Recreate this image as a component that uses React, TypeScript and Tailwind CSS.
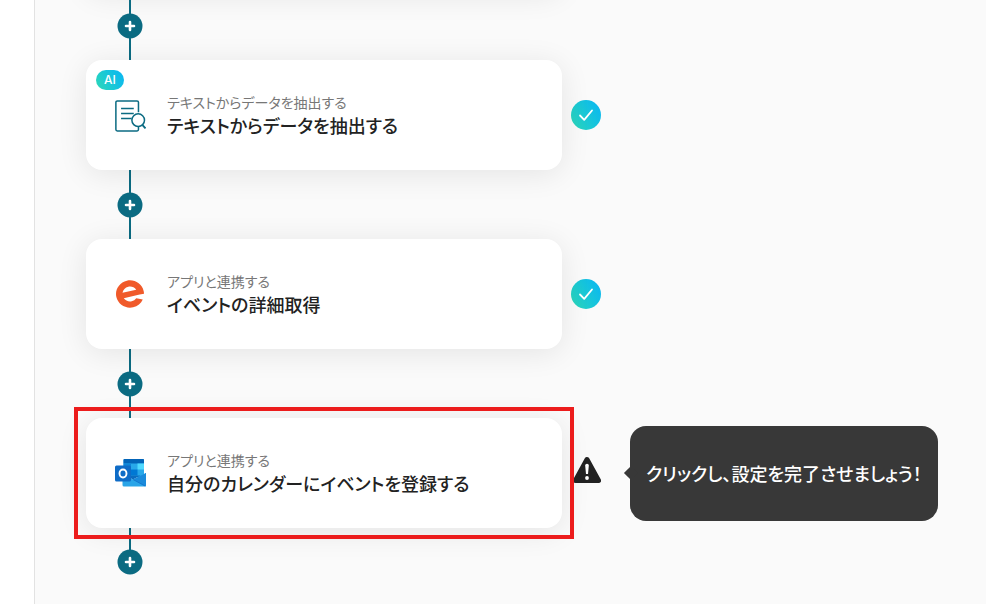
import clsx from 'clsx'
import React from 'react'
import { SiEventbrite } from 'react-icons/si'

interface FlowStep {
  id: string
  category: string
  title: string
  icon: React.ReactNode
  isAi?: boolean
  warning?: string
}

const ExtractIcon = () => (
  <svg width="34" height="36" viewBox="0 0 34 36" fill="none" stroke="#0b6b82" strokeWidth="1.6" aria-hidden="true">
    <path d="M26 15V4.500A1.500 1.500 0 0 0 24.500 3H3.500A1.500 1.500 0 0 0 2 4.500V33.500A1.500 1.500 0 0 0 3.500 35H24.500A1.500 1.500 0 0 0 26 33.500V30.500" />
    <path d="M7.500 11h13.500M7.500 16.300h13.500M7.500 21.600h11" />
    <circle cx="25.700" cy="23.500" r="6.700" />
    <path d="M30.300 28.800L33.500 32.300" strokeWidth="2" />
  </svg>
)

const OutlookIcon = () => (
  <svg width="32" height="32" viewBox="0 0 32 32" aria-hidden="true">
    <path d="M9.500 3a1 1 0 0 1 1-1H29a1 1 0 0 1 1 1v17H9.500z" fill="#28a8ea" />
    <path d="M9.500 3a1 1 0 0 1 1-1H29a1 1 0 0 1 1 1v3.500H9.500z" fill="#0364b8" />
    <path d="M9.500 6.500H17v6H9.500z" fill="#0f86d8" />
    <path d="M23.500 6.500H30v6h-6.500z" fill="#50d9ff" />
    <path d="M9.500 12.500H17v6H9.500z" fill="#0364b8" />
    <path d="M17 12.500h6.500v6H17z" fill="#0078d4" />
    <path d="M8.500 19L19.500 22.500 32 16v12a1.500 1.500 0 0 1-1.500 1.500H10A1.500 1.500 0 0 1 8.500 28z" fill="#2aa5e8" />
    <path d="M32 16v12a1.500 1.500 0 0 1-.6 1.200L19 22.500z" fill="#1a8adb" />
    <path d="M31.400 29.200L19 22.500" stroke="#0f6cc7" strokeWidth=".7" />
    <path d="M17 18.500h9.500L19 22.500l-2-1z" fill="#0a6cc0" />
    <rect x="1" y="8.500" width="16" height="16" rx="1.500" fill="#0f6cc7" />
    <ellipse cx="9" cy="16.500" rx="3.500" ry="4" fill="none" stroke="#fff" strokeWidth="1.900" />
  </svg>
)

const WarningIcon = () => (
  <svg width="30" height="30" viewBox="0 0 30 30" role="img" aria-label="未設定">
    <path d="M16 3.500L27.500 24.500H4.500z" fill="#222" stroke="#222" strokeWidth="5" strokeLinejoin="round" />
    <path d="M14.200 9.500a1.800 1.800 0 0 1 3.600 0L17 18h-2z" fill="#fff" />
    <circle cx="16" cy="22" r="1.900" fill="#fff" />
  </svg>
)

const steps: FlowStep[] = [
  {
    id: 'extract',
    category: 'テキストからデータを抽出する',
    title: 'テキストからデータを抽出する',
    icon: <ExtractIcon />,
    isAi: true,
  },
  {
    id: 'event-detail',
    category: 'アプリと連携する',
    title: 'イベントの詳細取得',
    icon: <SiEventbrite size={28} color="#f05a2a" aria-hidden="true" />,
  },
  {
    id: 'calendar',
    category: 'アプリと連携する',
    title: '自分のカレンダーにイベントを登録する',
    icon: <OutlookIcon />,
    warning: 'クリックし、設定を完了させましょう！',
  },
]

function Connector({ last }: { last?: boolean }) {
  return (
    <div className={clsx('ml-8 flex w-6 flex-col items-center', !last && 'h-[69px]')}>
      <span className={clsx('w-0.5 bg-[#0b6b82]', last ? 'h-[22px]' : 'flex-1')} />
      <button type="button" aria-label="ステップを追加" className="-my-px flex-none cursor-pointer">
        <svg width="26" height="26" viewBox="0 0 26 26" aria-hidden="true">
          <circle cx="13" cy="13" r="12.500" fill="#0b6b82" />
          <path d="M13 9v8M9 13h8" stroke="#fff" strokeWidth="2.600" strokeLinecap="round" />
        </svg>
      </button>
      {!last && <span className="w-0.5 flex-1 bg-[#0b6b82]" />}
    </div>
  )
}

function DoneBadge() {
  return (
    <span className="flex size-[30px] items-center justify-center rounded-full bg-linear-60 from-[#2ed8b6] to-[#0cb4f5]">
      <svg width="16" height="14" viewBox="0 0 16 14" fill="none" role="img" aria-label="設定済み">
        <path d="M2 7.500l4.200 4.300L14 2.500" stroke="#fff" strokeWidth="1.800" strokeLinecap="round" strokeLinejoin="round" />
      </svg>
    </span>
  )
}

function StepCard({ step }: { step: FlowStep }) {
  return (
    <div className="flex items-center">
      <div className="relative w-full max-w-[476px]">
        <button
          type="button"
          className="flex h-[110px] w-full cursor-pointer items-center gap-[21px] rounded-2xl bg-white pl-7 text-left shadow-[0_4px_30px_rgba(0,0,0,0.09)]"
        >
          <span className="flex w-8 flex-none justify-center">{step.icon}</span>
          <span className="flex flex-col">
            <span className="text-sm leading-5 text-[#777]">{step.category}</span>
            <span className="text-lg leading-[26px] font-medium text-[#222]">{step.title}</span>
          </span>
        </button>
        {step.isAi && (
          <span className="absolute top-2.5 left-2.5 rounded-full bg-linear-60 from-[#2ed8b6] to-[#0cb4f5] px-2 font-[Inter,sans-serif] text-xs leading-5 font-medium text-white">
            AI
          </span>
        )}
        {step.warning && (
          <span className="pointer-events-none absolute -inset-x-3 -inset-y-[11px] z-10 border-4 border-[#ec1c1c]" />
        )}
      </div>
      <div className={clsx('ml-[9px] flex-none', step.warning && 'pb-1')}>
        {step.warning ? <WarningIcon /> : <DoneBadge />}
      </div>
      {step.warning && (
        <div
          role="tooltip"
          className="relative ml-[29px] flex h-[95px] flex-none items-center rounded-2xl bg-[#383838] px-4 text-lg font-medium whitespace-nowrap text-white"
        >
          <span className="absolute top-1/2 -left-1 size-2.5 -translate-y-1/2 rotate-45 bg-[#383838]" />
          {step.warning}
        </div>
      )}
    </div>
  )
}

export default function App() {
  return (
    <div className="flex h-screen overflow-hidden bg-white font-['Noto_Sans_CJK_JP',sans-serif] [font-feature-settings:'palt']">
      <aside className="w-[35px] flex-none border-r border-[#e2e2e2]" />
      <main className="min-w-0 flex-1 overflow-hidden bg-[#fafafa] pl-[51px]">
        {/* tail of the previous step, scrolled past the top edge */}
        <div className="-mt-[119px] h-[110px] w-full max-w-[476px] rounded-2xl bg-white shadow-[0_4px_30px_rgba(0,0,0,0.09)]" />
        <Connector />
        {steps.map((step, i) => (
          <React.Fragment key={step.id}>
            <StepCard step={step} />
            <Connector last={i === steps.length - 1} />
          </React.Fragment>
        ))}
      </main>
    </div>
  )
}
